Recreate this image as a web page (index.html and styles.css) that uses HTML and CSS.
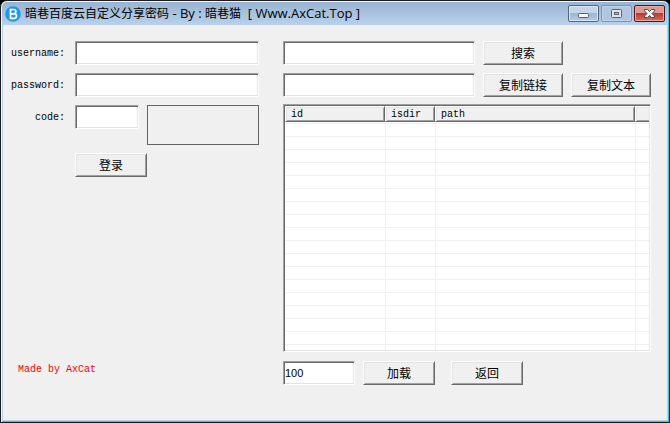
FILE: index.html
```html
<!DOCTYPE html>
<html lang="zh-CN">
<head>
    <meta charset="UTF-8">
    <meta name="viewport" content="width=device-width, initial-scale=1.0">
    <title>暗巷百度云自定义分享密码</title>
    <link rel="stylesheet" href="styles.css">
</head>
<body>
    <div class="window">
        <header class="title-bar">
            <svg class="app-icon" width="16" height="16" viewBox="0 0 16 16">
                <circle cx="8" cy="8" r="7.8" fill="#1c9be6"/>
                <path d="M5.5 3.5h3.2a2.1 2.1 0 0 1 0 4.3H5.5zM5.5 7.8h3.7a2.3 2.3 0 0 1 0 4.6H5.5z" fill="none" stroke="#fff" stroke-width="1.7"/>
            </svg>
            <h1 class="title">暗巷百度云自定义分享密码<span class="latin"> - By : </span>暗巷猫<span class="latin">&nbsp; [ Www.AxCat.Top ]</span></h1>
            <div class="window-buttons">
                <button class="win-btn" type="button" aria-label="Minimize">
                    <svg width="13" height="11" viewBox="0 0 13 11">
                        <rect x="1.5" y="5.5" width="10" height="4" rx="1" fill="#f7f7f7" stroke="#565d6b"/>
                    </svg>
                </button>
                <button class="win-btn win-btn-disabled" type="button" aria-label="Maximize">
                    <svg width="13" height="11" viewBox="0 0 13 11">
                        <rect x="1.5" y="1.5" width="10" height="8" rx="1" fill="#dfe3ea" stroke="#5d6473"/>
                        <rect x="4.5" y="4.5" width="4" height="2" fill="#a9c0dc" stroke="#5d6473"/>
                    </svg>
                </button>
                <button class="win-btn win-btn-close" type="button" aria-label="Close">
                    <svg width="13" height="11" viewBox="0 0 13 11">
                        <path d="M1.5 1.5h3l2 2 2-2h3v1.500L9 5.500l2.500 2.500v1.500h-3l-2-2-2 2h-3V8L4 5.500 1.500 3z" fill="#f4f4f4" stroke="#4d4a58"/>
                    </svg>
                </button>
            </div>
        </header>

        <main class="content">
            <section class="login">
                <form class="login-form">
                    <label for="username">username:</label>
                    <input id="username" class="field" type="text">
                    <label for="password">password:</label>
                    <input id="password" class="field" type="password">
                    <label for="code">code:</label>
                    <div class="code-row">
                        <input id="code" class="field" type="text">
                        <div class="captcha"></div>
                    </div>
                    <button class="btn btn-login" type="button">登录</button>
                </form>
                <p class="credit">Made by AxCat</p>
            </section>

            <section class="files">
                <div class="toolbar">
                    <input class="field" type="text" aria-label="搜索">
                    <button class="btn" type="button">搜索</button>
                    <input class="field link-field" type="text" aria-label="链接">
                    <button class="btn" type="button">复制链接</button>
                    <button class="btn" type="button">复制文本</button>
                </div>
                <div class="list">
                    <table>
                        <colgroup>
                            <col class="col-id">
                            <col class="col-isdir">
                            <col class="col-path">
                            <col>
                        </colgroup>
                        <thead>
                            <tr>
                                <th>id</th>
                                <th>isdir</th>
                                <th>path</th>
                                <th></th>
                            </tr>
                        </thead>
                        <tbody id="fileRows"></tbody>
                    </table>
                </div>
                <div class="pager">
                    <input class="field count-field" type="text" value="100" aria-label="数量">
                    <button class="btn" type="button">加载</button>
                    <button class="btn btn-back" type="button">返回</button>
                </div>
            </section>
        </main>
    </div>

    <script>
        // Empty rows so the list shows its grid lines before anything is loaded
        const fileRows = document.getElementById('fileRows');
        for (let i = 0; i < 60; i++) {
            const row = fileRows.insertRow();
            for (let c = 0; c < 4; c++) {
                row.insertCell();
            }
        }
    </script>
</body>
</html>
```

FILE: styles.css
```css
* {
    box-sizing: border-box;
}
body {
    margin: 0;
    background: #000;
    font-family: "Liberation Mono", "Noto Sans CJK SC", monospace;
    font-size: 10px;
    color: #000;
}
.window {
    display: flex;
    flex-direction: column;
    height: 100vh;
    border: 1px solid #1a1a1f;
    border-radius: 7px 7px 0 0;
    background: #f0f0f0;
    box-shadow: inset 1px 1px #f4f8fc, inset -1px -1px #35c5e8, inset 2px 0 #b9d1ea, inset -2px -2px #b9d1ea;
}

/* Title bar */
.title-bar {
    display: flex;
    flex: none;
    align-items: center;
    height: 23px;
    margin: 1px 1px 0;
    padding: 0 3px;
    border-radius: 5px 5px 0 0;
    background: linear-gradient(#99b4d1, #b9d1ea);
}
.title {
    flex: 1;
    margin: 0 0 0 4px;
    font-family: "Open Sans", "Noto Sans CJK SC", sans-serif;
    font-size: 12px;
    font-weight: normal;
    line-height: 20px;
    white-space: pre;
}
.latin {
    font-size: 13px;
}
.window-buttons {
    display: flex;
    gap: 2px;
}
.win-btn {
    display: flex;
    align-items: center;
    justify-content: center;
    width: 31px;
    height: 17px;
    padding: 0;
    border: 1px solid #56657c;
    border-radius: 2px;
    background: linear-gradient(#c3d5e9 50%, #9cb6d3 50%, #b5cce6);
    box-shadow: inset 0 0 0 1px #d9e6f4;
}
.win-btn-disabled {
    border-color: #7d93b0;
    background: #aec6e1;
    box-shadow: inset 0 0 0 1px #bfd3e9;
}
.win-btn-close {
    border-color: #501420;
    background: linear-gradient(#dd9a90 50%, #b93c2c 50%, #d0705c);
    box-shadow: inset 0 0 0 1px #e5aaa2;
}

/* Controls */
.field {
    width: 100%;
    min-width: 0;
    height: 24px;
    padding: 1px;
    border: 1px solid;
    border-color: #a0a0a0 #fff #fff #a0a0a0;
    border-radius: 0;
    background: #fff;
    box-shadow: inset 1px 1px #696969, inset -1px -1px #e3e3e3;
    font: inherit;
    outline: none;
}
.btn {
    width: 72px;
    height: 24px;
    padding: 0;
    border: 1px solid;
    border-color: #fff #696969 #696969 #fff;
    background: #f0f0f0;
    box-shadow: inset 1px 1px #e3e3e3, inset -1px -1px #a0a0a0;
    font-family: "Noto Sans CJK SC", sans-serif;
    font-size: 12px;
    line-height: 20px;
    color: #000;
}

/* Main area */
.content {
    display: flex;
    flex: 1;
    gap: 24px;
    min-height: 0;
    padding: 16px 18px 37px 10px;
}
.login {
    display: flex;
    flex: none;
    flex-direction: column;
    justify-content: space-between;
}
.login-form {
    display: grid;
    grid-template-columns: 54px 184px;
    gap: 8px 10px;
}
.login-form label {
    height: 24px;
    line-height: 26px;
    text-align: right;
}
.code-row {
    display: flex;
    gap: 8px;
}
.code-row .field {
    width: 64px;
}
.captcha {
    flex: 1;
    height: 40px;
    border: 1px solid #646464;
}
.btn-login {
    grid-column: 2;
}
.credit {
    margin: 0 0 7px 7px;
    line-height: 16px;
    color: #f00;
}
.files {
    display: flex;
    flex: 1;
    flex-direction: column;
    min-width: 0;
}
.toolbar {
    display: grid;
    grid-template-columns: 1fr 80px 80px;
    gap: 8px;
}
.toolbar .btn {
    width: 80px;
}
.link-field {
    grid-column: 1;
}

/* File list */
.list {
    position: relative;
    flex: 1;
    min-height: 0;
    margin: 7px 0 9px;
    padding: 1px 0 0 1px;
    border: 1px solid;
    border-color: #a0a0a0 #fff #fff #a0a0a0;
    overflow: hidden;
}
/* Inner bevel, drawn over the rows */
.list::after {
    content: "";
    position: absolute;
    inset: 0;
    box-shadow: inset 1px 1px #696969, inset -1px -1px #e3e3e3;
}
table {
    width: 100%;
    table-layout: fixed;
    border-collapse: separate;
    border-spacing: 0;
    background: #fff;
}
.col-id {
    width: 100px;
}
.col-isdir {
    width: 50px;
}
.col-path {
    width: 200px;
}
th {
    height: 16px;
    padding: 1px 5px 0;
    border: 1px solid;
    border-color: #fff #696969 #696969 #fff;
    background: #f0f0f0;
    box-shadow: inset 1px 1px #e3e3e3, inset -1px -1px #a0a0a0;
    font-weight: normal;
    line-height: 13px;
    text-align: left;
}
th:last-child {
    border-right: 0;
    box-shadow: inset 1px 1px #e3e3e3, inset 0 -1px #a0a0a0;
}
td {
    height: 13px;
    padding: 0;
    border-bottom: 1px solid #f0f0f0;
}
td + td {
    border-left: 1px solid #f0f0f0;
}
tbody tr:first-child td {
    height: 2px;
}

/* Bottom row */
.pager {
    display: flex;
    gap: 8px;
}
.count-field {
    width: 72px;
    font-family: "Liberation Sans", sans-serif;
    font-size: 11px;
}
.btn-back {
    margin-left: 8px;
}
```
